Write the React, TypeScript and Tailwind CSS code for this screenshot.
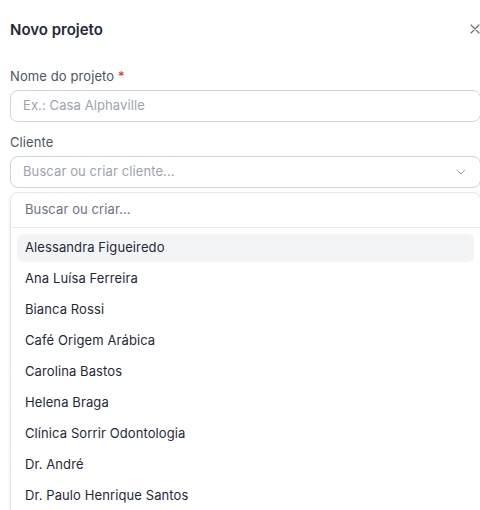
import React from "react";

const clients = [
  "Alessandra Figueiredo",
  "Ana Luísa Ferreira",
  "Bianca Rossi",
  "Café Origem Arábica",
  "Carolina Bastos",
  "Helena Braga",
  "Clínica Sorrir Odontologia",
  "Dr. André",
  "Dr. Paulo Henrique Santos",
];

export default function App() {
  return (
    <div
      className="w-[480px] h-[510px] overflow-hidden bg-white relative"
      style={{ fontFamily: "Inter, 'Noto Sans', sans-serif" }}
    >
      <div className="pl-[10px] w-[491px]">
        <div className="h-[58px] flex items-center justify-between pr-[11px]">
          <h2 className="text-[15px] font-semibold text-[#1f2937] leading-none">Novo projeto</h2>
          <svg width="10" height="10" viewBox="0 0 10 10" className="text-[#6b7280]">
            <path d="M1 1 L9 9 M9 1 L1 9" stroke="currentColor" strokeWidth="1.2" strokeLinecap="round" />
          </svg>
        </div>
        <div className="flex flex-col tracking-[0.1px]">
          <label className="mt-[10px] text-[13px] leading-[16px] text-[#4b5563]">
            Nome do projeto <span className="text-[#dc2626]">*</span>
          </label>
          <div className="mt-[6px] w-[471px] h-[32px] border border-[#d1d5db] rounded-[8px] flex items-center px-[12px] text-[13px] text-[#9ca3af]">
            Ex.: Casa Alphaville
          </div>
          <label className="mt-[12px] text-[13px] leading-[16px] text-[#4b5563]">Cliente</label>
          <div className="mt-[6px] w-[471px] h-[32px] border border-[#d1d5db] rounded-[8px] flex items-center justify-between pl-[12px] pr-[14px] text-[13px] text-[#9ca3af]">
            <span>Buscar ou criar cliente...</span>
            <svg width="10" height="6" viewBox="0 0 10 6" className="text-[#9ca3af]">
              <path d="M1 1 L5 5 L9 1" fill="none" stroke="currentColor" strokeWidth="1" strokeLinecap="round" strokeLinejoin="round" />
            </svg>
          </div>
          <div className="mt-[4px] w-[471px] border border-[#e5e7eb] rounded-[8px] bg-white shadow-sm">
            <div className="h-[35px] flex items-center px-[14px] text-[13px] text-[#6b7280] border-b border-[#e5e7eb]">
              Buscar ou criar...
            </div>
            <div className="flex flex-col gap-[3px] p-[6px]">
              {clients.map((c, i) => (
                <div
                  key={c}
                  className={
                    i === 0
                      ? "h-[28px] flex items-center px-[8px] rounded-[6px] bg-[#f3f4f6] text-[13px] text-[#1f2937]"
                      : "h-[28px] flex items-center px-[8px] rounded-[6px] text-[13px] text-[#1f2937]"
                  }
                >
                  {c}
                </div>
              ))}
            </div>
          </div>
        </div>
      </div>
    </div>
  );
}
